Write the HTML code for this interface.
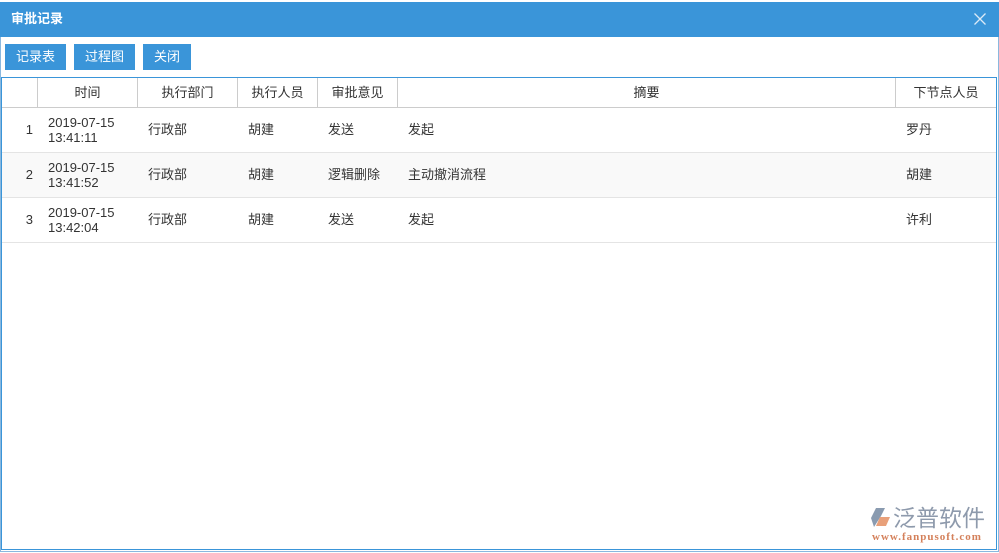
<!DOCTYPE html><html><head><meta charset="utf-8"><style>
body{margin:0;width:999px;height:553px;overflow:hidden;background:#fff;font-family:"Liberation Sans","Noto Sans CJK SC",sans-serif;font-size:13px;color:#333;position:relative}
.title{position:absolute;left:0;top:2px;width:999px;height:35px;background:#3a95d9;color:#fff;font-weight:bold;font-size:13px;line-height:34px}
.title span{margin-left:11px}
.x{position:absolute;right:13px;top:11px;width:12px;height:12px}
.btn{position:absolute;top:44px;height:26px;background:#3a95d9;color:#fff;line-height:26px;text-align:center;font-size:13px}
.frame{position:absolute;left:0;top:37px;width:997px;height:514px;border:1px solid #8ab8de;border-top:none}
.tbl{position:absolute;left:1px;top:77px;width:994px;height:471px;border:1px solid #3a95d9}
.hd{position:absolute;top:0;height:30px;line-height:29px;text-align:center;border-right:1px solid #ccc;border-bottom:1px solid #ccc;box-sizing:border-box}
.row{position:absolute;left:0;width:994px;height:45px;border-bottom:1px solid #e4e4e4;box-sizing:border-box}
.cell{position:absolute;top:0;height:44px;line-height:44px;padding-left:10px;box-sizing:border-box}
.dt{line-height:15px;padding-top:7px}
</style></head><body>
<div class="title"><span>审批记录</span>
<svg class="x" viewBox="0 0 12 12"><path d="M0.5 0.5L11.5 11.5M11.5 0.5L0.5 11.5" stroke="#dbeaf7" stroke-width="1.3"/></svg></div>
<div class="frame"></div>
<div class="btn" style="left:5px;width:61px">记录表</div>
<div class="btn" style="left:74px;width:61px">过程图</div>
<div class="btn" style="left:143px;width:48px">关闭</div>
<div class="tbl">
<div class="hd" style="left:0;width:36px"></div>
<div class="hd" style="left:36px;width:100px">时间</div>
<div class="hd" style="left:136px;width:100px">执行部门</div>
<div class="hd" style="left:236px;width:80px">执行人员</div>
<div class="hd" style="left:316px;width:80px">审批意见</div>
<div class="hd" style="left:396px;width:498px">摘要</div>
<div class="hd" style="left:894px;width:100px;border-right:none">下节点人员</div>

<div class="row" style="top:30px">
<div class="cell" style="left:0;width:36px;text-align:right;padding-right:5px">1</div>
<div class="cell dt" style="left:36px">2019-07-15<br>13:41:11</div>
<div class="cell" style="left:136px">行政部</div><div class="cell" style="left:236px">胡建</div>
<div class="cell" style="left:316px">发送</div><div class="cell" style="left:396px">发起</div>
<div class="cell" style="left:894px">罗丹</div></div>
<div class="row" style="top:75px;background:#f9f9f9">
<div class="cell" style="left:0;width:36px;text-align:right;padding-right:5px">2</div>
<div class="cell dt" style="left:36px">2019-07-15<br>13:41:52</div>
<div class="cell" style="left:136px">行政部</div><div class="cell" style="left:236px">胡建</div>
<div class="cell" style="left:316px">逻辑删除</div><div class="cell" style="left:396px">主动撤消流程</div>
<div class="cell" style="left:894px">胡建</div></div>
<div class="row" style="top:120px">
<div class="cell" style="left:0;width:36px;text-align:right;padding-right:5px">3</div>
<div class="cell dt" style="left:36px">2019-07-15<br>13:42:04</div>
<div class="cell" style="left:136px">行政部</div><div class="cell" style="left:236px">胡建</div>
<div class="cell" style="left:316px">发送</div><div class="cell" style="left:396px">发起</div>
<div class="cell" style="left:894px">许利</div></div>
</div>
<div style="position:absolute;left:870px;top:507px;width:22px;height:22px">
<svg width="22" height="22" viewBox="0 0 22 22"><path d="M6 1L15 1L11 9L4 20L1 11Z" fill="#8a9bb0"/><path d="M10 10L20 10L16 19L6 19Z" fill="#e8a07a"/></svg></div>
<div style="position:absolute;left:893px;top:505px;font-size:23px;color:#8e9aac;letter-spacing:0px;line-height:26px">泛普软件</div>
<div style="position:absolute;left:872px;top:531px;font-size:11px;font-weight:bold;color:#d4805a;font-family:'Liberation Serif',serif;letter-spacing:1px">www.fanpusoft.com</div>
</body></html>
